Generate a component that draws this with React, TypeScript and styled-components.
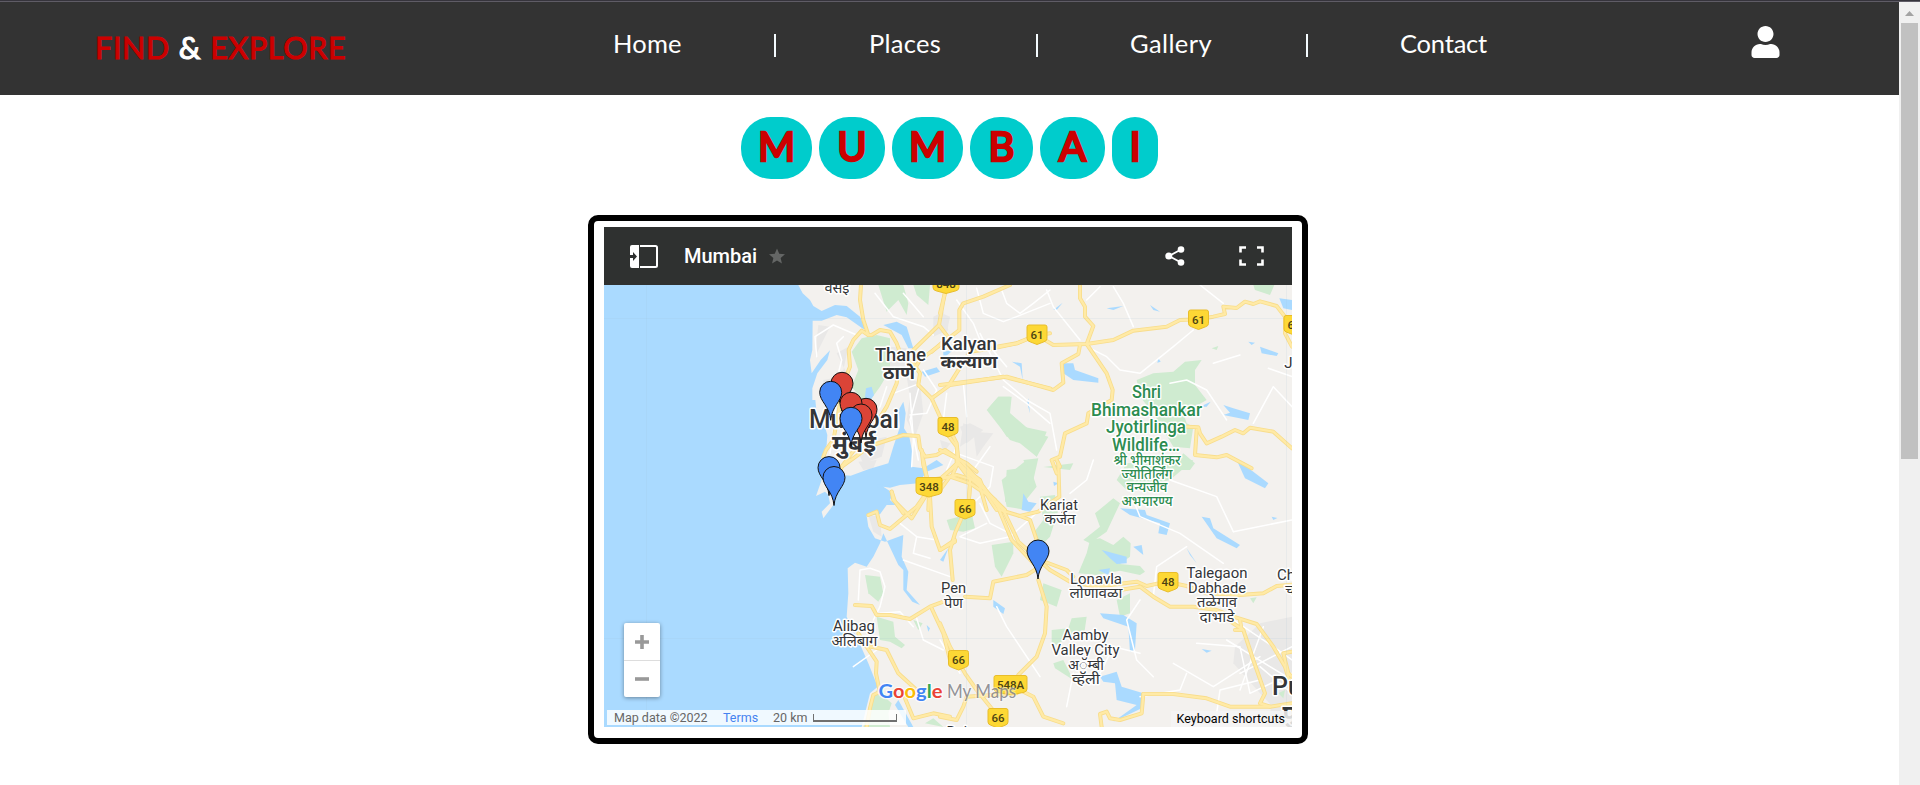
import React from 'react';
import styled, { createGlobalStyle } from 'styled-components';

const GlobalStyle = createGlobalStyle`
  * { box-sizing: border-box; }
  html, body { margin: 0; padding: 0; background: #fff; overflow: hidden; }
`;

const Window = styled.div`
  display: flex;
  flex-direction: column;
  width: 1920px;
  height: 785px;
  font-family: Lato, 'Open Sans', sans-serif;
`;

const WindowEdge = styled.div`
  flex: none;
  height: 2px;
  background: linear-gradient(#36343c 50%, #5f5c66 50%);
`;

const Viewport = styled.div`
  display: flex;
  flex: 1;
  min-height: 0;
`;

const Page = styled.div`
  flex: 1;
  min-width: 0;
  overflow: hidden;
`;

const ScrollTrack = styled.div`
  display: flex;
  flex-direction: column;
  align-items: center;
  width: 21px;
  background: #f0f0f0;
`;

const ScrollArrow = styled.svg`
  flex: none;
  width: 21px;
  height: 21px;
`;

const ScrollThumb = styled.div`
  width: 17px;
  height: 436px;
  background: #c1c1c1;
`;

const Header = styled.header`
  display: flex;
  height: 93px;
  padding-left: 95px;
  background: #333;
  color: #fff;
`;

const Brand = styled.div`
  width: 518px;
  padding-top: 26px;
  font-size: 30.5px;
  line-height: 38px;
  font-weight: 400;
  word-spacing: 0.5px;
  letter-spacing: 0.65px;
  color: #fff;
  white-space: nowrap;
  -webkit-text-stroke: 1.1px currentColor;
`;

const BrandWord = styled.span`
  color: #c00;
`;

const Nav = styled.nav`
  display: flex;
  width: 1138px;
  padding-top: 24px;
  font-size: 25.5px;
  line-height: 34px;
`;

const NavItem = styled.a<{ $width: number; $spacing?: number }>`
  width: ${(p) => p.$width}px;
  letter-spacing: ${(p) => p.$spacing ?? 0}px;
  white-space: nowrap;
`;

const NavDivider = styled.span<{ $width: number }>`
  width: ${(p) => p.$width}px;
  padding-top: 8px;
  &::before {
    content: '';
    display: block;
    width: 2px;
    height: 23px;
    background: #f4fbff;
  }
`;

const UserIcon = styled.svg`
  width: 29px;
  height: 32px;
  margin-top: 24px;
`;

const Title = styled.h1`
  display: flex;
  gap: 7px;
  height: 62px;
  margin: 22px 0 0 741px;
  color: #c00;
  font-size: 40px;
  font-weight: 400;
  line-height: 59px;
`;

const Letter = styled.span<{ $width: number }>`
  width: ${(p) => p.$width}px;
  border-radius: 30px;
  background: #0cc;
  text-align: center;
  -webkit-text-stroke: 2.6px #c00;
`;

const MapFrame = styled.section`
  width: 720px;
  height: 529px;
  margin: 36px 0 0 588px;
  padding: 6px 10px 11px;
  border: 6px solid #000;
  border-radius: 10px;
  font-family: Roboto, sans-serif;
`;

const MapBar = styled.div`
  display: flex;
  align-items: center;
  height: 58px;
  padding: 0 28px 0 26px;
  background: #2f3130;
  color: #fff;
`;

const MapTitle = styled.h2`
  flex: 1;
  display: flex;
  align-items: center;
  gap: 12px;
  margin: 0 0 0 26px;
  font-size: 20px;
  font-weight: 500;
`;

const BarIcon = styled.svg<{ $width: number; $height: number; $gap?: number }>`
  width: ${(p) => p.$width}px;
  height: ${(p) => p.$height}px;
  margin-left: ${(p) => p.$gap ?? 0}px;
`;

const MapCanvas = styled.div`
  position: relative;
  height: 442px;
  overflow: hidden;
`;

const MapDrawing = styled.svg`
  display: block;
  width: 688px;
  height: 442px;
`;

const ZoomControl = styled.div`
  position: absolute;
  left: 20px;
  top: 338px;
  width: 36px;
  border-radius: 2px;
  background: #fff;
  box-shadow: 0 1px 4px rgba(0, 0, 0, 0.4);
`;

const ZoomButton = styled.div`
  display: flex;
  align-items: center;
  justify-content: center;
  height: 37px;
  & + & { border-top: 1px solid #ddd; }
`;

const Attribution = styled.div`
  position: absolute;
  left: 3px;
  bottom: 2px;
  display: flex;
  align-items: center;
  width: 299px;
  height: 15px;
  padding-left: 7px;
  background: rgba(255, 255, 255, 0.82);
  color: #666;
  font-size: 12.5px;
  white-space: nowrap;
`;

const Credit = styled.span<{ $width: number; $link?: boolean }>`
  width: ${(p) => p.$width}px;
  color: ${(p) => (p.$link ? '#4583f0' : 'inherit')};
`;

const ScaleBar = styled.span`
  width: 84px;
  height: 8px;
  margin-top: 1px;
  border: solid #707070;
  border-width: 0 1px 2px;
`;

const Shortcuts = styled.div`
  position: absolute;
  right: 0;
  bottom: 0;
  height: 16px;
  padding: 0 7px 0 6px;
  background: rgba(245, 245, 245, 0.85);
  color: #000;
  font-size: 12.5px;
  line-height: 16px;
`;

const LETTERS: [string, number][] = [['M', 71], ['U', 66], ['M', 71], ['B', 63], ['A', 65], ['I', 46]];

/* Every tile is drawn at three units to the pixel, from its own corner. */
interface Tile {
  x: number;
  y: number;
  parks?: string[];
  lakes?: string[];
  urban?: string[];
  lanes?: string[];
  roads?: string[];
}

const SEA =
  '0,0 583,0 596,25 618,45 628,63 653,78 693,60 728,63 768,95 784,130 778,132 728,97 698,90 653,107 626,107 625,195 618,225 623,265 ' +
  '650,225 678,196 670,225 640,265 625,310 625,345 634,345 638,385 663,425 670,450 668,480 653,515 650,555 653,585 636,633 663,620 673,630 678,655 ' +
  '653,680 658,700 688,660 696,605 713,570 740,572 773,560 793,553 853,535 868,485 888,425 884,375 898,350 905,385 900,430 916,455 925,505 923,545 ' +
  '958,550 998,525 1018,540 968,560 943,595 888,600 858,608 838,605 868,625 858,645 875,660 848,660 828,688 788,692 793,725 813,760 843,770 898,750 893,815 ' +
  '913,860 908,915 948,960 925,950 898,915 898,855 883,840 838,745 828,775 808,815 788,845 753,833 731,850 733,925 728,995 758,1055 793,1135 821,1205 798,1225 778,1305 773,1326 0,1326';

const TILES: Tile[] = [
  {
    x: 790, y: 280,
    urban: [
      '85,135 120,140 75,230', '140,220 175,200 160,270 130,330 140,360 180,300', '100,300 150,290 140,380 105,400',
      '350,290 390,310 400,400 375,470 350,420 360,350', '430,110 460,95 475,150 430,170', '240,480 290,470 275,530 220,550 205,520',
      '300,200 350,205 340,290 300,280', '520,430 545,440 540,480 510,500', '550,455 610,460 580,500 560,530',
    ],
    parks: [
      '215,175 260,165 300,175 300,270 270,320 230,375 185,320 205,270 185,215', '265,15 340,15 355,70 350,105 325,60 290,95',
      '370,15 420,15 415,75 380,45', '595,385 625,350 660,350 655,395 725,455 775,470 740,530 700,480 650,470',
      '650,570 720,560 740,620 700,670 645,665', '700,540 745,535 730,600',
    ],
    lakes: ['228,325 245,320 252,345 235,370 225,350', '280,135 320,125 350,140 370,205 355,205 335,165 290,140', '395,275 440,262 450,275 405,290', '460,215 490,210 460,235'],
    lanes: [
      '80,230 75,170 130,135 200,165', '160,170 140,190 155,240 140,300 135,420 120,520', '255,40 310,110 400,140 430,165',
      '340,40 400,110', '500,60 550,130 570,180', '310,340 390,310 360,420 385,540', '400,270 440,330 410,400 360,405',
      '560,25 580,100 640,125 680,110 780,70', '470,340 460,420 480,450', '640,320 710,370 780,430', '500,520 610,560 600,620 530,690',
      '190,500 220,440 270,380 290,320', '360,340 370,480 365,560',
    ],
    roads: [
      '213,15 210,60 220,120 235,165 215,152 190,180 176,210 180,260 160,310 145,400 130,480 108,510 100,530',
      '235,165 245,165 270,150 300,155 320,190 335,230 370,250 390,280 385,315 425,355',
      '465,35 455,90 447,135 370,210', '447,135 475,172 425,215', '660,15 580,50 520,70 508,90 508,150 450,195 390,240 375,265',
      '780,160 742,165 680,190 620,203 540,215 480,310', '425,355 480,315 640,290 700,305 780,325',
      '425,355 450,410 475,440 500,490 505,545 485,590', '155,560 190,535 240,498 340,465 385,468 390,505 405,530 440,525 465,510 510,540 565,600 600,660 620,690',
      '395,510 400,555 418,620 415,690', '325,270 320,310 290,380 240,460 200,500 155,560 140,620', '305,635 315,665 340,700',
      '418,620 460,595 500,585 550,600 580,625 645,690', '540,600 535,690', '500,545 530,585 570,620 590,690', '440,605 500,555',
    ],
  },
  {
    x: 580, y: 460,
    urban: ['835,5 890,0 880,25 850,30', '865,165 900,170 905,230 880,215'],
    parks: ['855,345 900,350 910,400 895,425 865,400', '890,470 940,485 945,530 975,555 965,565 930,545 900,540', '1000,480 1028,490 1015,510', '870,730 890,690 935,730 925,760 930,801 850,801', '1035,790 1060,775 1090,801'],
    lakes: ['1040,495 1050,505 1045,515', '955,720 1000,801 985,801 945,735', '888,75 908,72 900,88'],
    lanes: ['835,420 840,330 870,325 900,335 915,380 900,440 880,480', '960,190 1010,230 1000,280 1050,295', '900,460 960,455 1000,500', '1070,240 1010,230', '970,300 1110,350', '820,620 890,570 880,540', '1010,475 1030,540 1090,570'],
    roads: [
      '825,435 875,438 890,465 930,465 990,477 1050,440 1090,425', '835,520 860,560 890,605 888,640 900,700', '850,555 920,570 945,620 955,640 1010,690',
      '1055,445 1090,520 1110,600', '975,715 1000,775 1060,760 1110,770', '860,801 870,745 880,705 900,695', '935,95 940,120 995,175 1045,95',
      '865,165 890,155 900,195 930,207 1010,140 1035,105', '1050,110 1055,200 1080,270 1125,245', '1030,0 1040,50', '785,20 810,0', '1050,60 1110,50',
    ],
  },
  {
    x: 940, y: 200,
    urban: ['60,680 90,670 130,690 80,730', '5,340 30,350 20,400 0,380', '0,720 30,730 60,690 10,760'],
    parks: [
      '590,540 640,520 700,515 735,485 785,480 765,510 765,555 800,600 730,640 740,670 760,680 750,745 700,740 640,640 600,590',
      '940,255 1003,255 990,285 945,270', '140,630 175,590 215,590 210,640 250,680 320,695 290,770 240,730 210,720', '815,445 835,438 830,450',
      '310,801 400,790 390,810', '730,760 765,790 750,810 690,810',
    ],
    lakes: [
      '370,490 400,490 405,510 475,535 475,548 400,540 370,520', '1018,295 1056,300 1056,330 1030,325', '960,440 1015,460 1010,468 965,460',
      '850,615 880,625 930,640 925,660 850,645 870,638', '500,325 550,318 520,330', '630,315 660,335 640,330', '340,330 368,308 350,330', '925,425 945,428 935,435', '780,620 812,605 800,620',
      '216,485 245,490 248,540 240,500', '265,595 270,640 262,610', '655,475 662,485 652,488',
    ],
    lanes: [
      '185,270 200,310 240,340 280,310 330,270', '320,270 340,320 420,420', '520,260 550,310 580,380', '440,440 500,470 540,510 600,520 700,440 760,390',
      '780,255 850,310', '120,400 190,540 260,600 330,640 350,750', '50,740 20,810', '690,550 740,540 800,570 840,630 860,660',
      '100,810 150,740', '150,440 200,500', '985,505 1056,530', '70,550 80,650', '940,670 1000,560 1056,620', '820,490 900,465', '480,260 440,300',
    ],
    roads: [
      '170,440 230,430 290,405 340,435 440,432 520,420 580,392 680,380 720,360 775,358 820,350 855,342 850,320 890,324 915,305 940,312 960,304 1010,318 1035,350 1035,400 1056,440',
      '420,255 420,295 435,320 435,350 460,378 440,432 500,520 518,570 515,600 445,640 440,670 375,700 360,770 335,780 350,820',
      '0,555 200,530 270,550 340,570 370,548 365,490 415,462 420,435', '0,340 15,280', '740,680 775,682 780,700 800,730 845,710 885,690 910,700 930,683 1000,695 1056,745',
      '770,690 765,765 830,772 860,765 935,805', '20,700 50,740 55,790', '0,750 80,790 110,815',
    ],
  },
  {
    x: 940, y: 460,
    urban: ['885,560 960,490 1056,470 1056,801 960,700 880,610', '1000,690 1056,650 1056,801 985,801'],
    parks: [
      '20,180 95,160 105,205 70,215 30,210', '155,255 220,245 220,280 185,350 165,320', '185,60 260,0 270,80 245,120 260,150 200,140',
      '300,110 345,105 355,150 330,230 300,260 280,220 310,180', '430,240 480,200 465,160 520,115 540,130 500,215 450,250', '415,340 440,280 450,240 480,235 520,255 550,230 572,250 570,290 540,312 600,318 615,335 600,345 540,332 470,345',
      '530,60 560,10 760,0 690,60 560,90', '310,370 365,390 350,440 300,420', '335,510 385,505 395,475 440,470 430,540 385,530 350,555 335,545', '530,420 570,400 570,460 540,470', '340,610 370,600 400,660 345,625',
      '1015,700 1035,690 1030,715', '930,415 950,412 940,430',
    ],
    lakes: [
      '250,100 265,125 290,130 270,155 245,150', '540,145 615,150 620,165 690,190 680,225 655,220 660,190 570,165', '485,270 560,290 560,310 530,312 510,295', '580,260 605,255 610,285',
      '785,170 810,175 820,205 900,255 890,265 830,235', '890,0 940,35 985,70 975,85 915,55', '480,460 550,465 590,490 585,570 570,575 565,500 490,475',
      '480,650 530,635 545,680 610,700 605,745 520,785 590,735 530,720 525,670 490,665', '160,420 195,445 190,462 160,440', '785,567 815,572 800,578',
      '740,265 770,310 750,285', '995,170 1012,174 1000,180', '475,330 510,325 505,345', '340,65 355,70 342,78', '0,300 25,265 10,305',
    ],
    lanes: [
      '140,190 60,230 120,250 210,230 300,150', '390,100 440,60 460,0', '580,120 600,170 720,220 850,310', '690,60 830,110 880,215', '1056,180 880,215',
      '170,440 200,500 300,650', '600,420 560,480 590,600 640,650', '640,410 650,320 740,260', '880,480 1000,560 1056,600', '770,550 900,560 930,700 1056,640',
      '700,610 820,680 960,590', '0,540 60,640', '480,640 520,560 600,580', '900,640 1056,560', '970,500 900,690', '400,640 380,740', '830,760 840,690 960,660', '860,540 1056,660', '600,710 720,690 740,640', '120,130 150,190 210,220', '960,620 1056,700',
    ],
    roads: [
      '0,60 50,10 120,60 130,85 190,150 235,245 330,330 390,365 470,380 590,365 620,378 680,365 740,378 800,400 900,405 970,400 1010,378 1056,374',
      '0,90 30,50 90,70 165,120 215,240 290,320', '50,0 85,40 130,80 180,150 240,168 270,180 290,240', '355,10 358,110 295,155 240,168',
      '300,300 380,330 400,350', '470,400 540,390 600,380 640,410 690,440 760,440 830,450 880,470 950,492 1000,560 1035,620 1056,690',
      '865,480 910,510 940,600 975,700 960,730 990,740', '885,510 905,510 900,480', '1056,575 1030,580 1045,640 1056,650', '300,320 260,345 160,365 150,415 75,410',
      '295,360 320,440 315,520 290,590 235,645', '75,150 45,220 30,270 38,360', '0,270 45,240', '90,80 85,140', '0,490 30,560 75,640 110,690 175,770',
      '250,695 280,710 310,770 370,790', '610,702 700,702 800,715 870,740 990,740 1056,730', '610,702 605,760 540,780 510,775 500,755 480,762 485,801',
      '0,770 50,780 70,740 80,710 230,700', '350,0 360,20',
    ],
  },
];

interface LabelSpec {
  text: string;
  x: number;
  y: number;
  size: number;
  width?: number;
  weight?: number;
  color?: string;
}

const GREEN = '#2c8c50';

const LABELS: LabelSpec[] = [
  { text: 'वसई', x: 837, y: 292.5, size: 15, width: 25 },
  { text: 'Thane', x: 900.5, y: 360.5, size: 18.5, width: 51, weight: 500 },
  { text: 'ठाणे', x: 899, y: 378.5, size: 18, width: 32, weight: 700 },
  { text: 'Kalyan', x: 969, y: 349.5, size: 18.5, width: 56, weight: 500 },
  { text: 'कल्याण', x: 969, y: 368, size: 18, width: 57, weight: 700 },
  { text: 'Mumbai', x: 854, y: 427.5, size: 25, width: 90, weight: 500 },
  { text: 'मुंबई', x: 854, y: 451.5, size: 24, width: 44, weight: 700 },
  { text: 'Shri', x: 1146.5, y: 398, size: 17.5, width: 29, weight: 500, color: GREEN },
  { text: 'Bhimashankar', x: 1146.5, y: 415.5, size: 17.5, width: 111, weight: 500, color: GREEN },
  { text: 'Jyotirlinga', x: 1146, y: 433, size: 17.5, width: 80, weight: 500, color: GREEN },
  { text: 'Wildlife…', x: 1146, y: 450.5, size: 17.5, width: 68, weight: 500, color: GREEN },
  { text: 'श्री भीमाशंकर', x: 1147, y: 464.5, size: 14, width: 67, weight: 500, color: GREEN },
  { text: 'ज्योतिर्लिंग', x: 1147, y: 478.5, size: 14, width: 51, weight: 500, color: GREEN },
  { text: 'वन्यजीव', x: 1147, y: 492, size: 14, width: 41, weight: 500, color: GREEN },
  { text: 'अभयारण्य', x: 1147, y: 505.5, size: 14, width: 51, weight: 500, color: GREEN },
  { text: 'Karjat', x: 1059, y: 509.5, size: 15, width: 38 },
  { text: 'कर्जत', x: 1060, y: 523.5, size: 15, width: 31 },
  { text: 'Lonavla', x: 1096, y: 584, size: 15, width: 52 },
  { text: 'लोणावळा', x: 1096, y: 598, size: 15, width: 53 },
  { text: 'Talegaon', x: 1217, y: 577.5, size: 15, width: 61 },
  { text: 'Dabhade', x: 1217, y: 592.5, size: 15, width: 58 },
  { text: 'तळेगाव', x: 1217, y: 607, size: 15, width: 40 },
  { text: 'दाभाडे', x: 1217, y: 621.5, size: 15, width: 35 },
  { text: 'Aamby', x: 1085.5, y: 639.5, size: 15, width: 46 },
  { text: 'Valley City', x: 1085.5, y: 654.5, size: 15, width: 68 },
  { text: 'अ◌ॅम्बी', x: 1086, y: 669.5, size: 15, width: 36 },
  { text: 'व्हॅली', x: 1086, y: 684, size: 15, width: 28 },
  { text: 'Pen', x: 953.5, y: 593, size: 15, width: 25 },
  { text: 'पेण', x: 953.5, y: 607.5, size: 15, width: 19 },
  { text: 'Alibag', x: 854, y: 631, size: 15, width: 42 },
  { text: 'अलिबाग', x: 854.5, y: 645.5, size: 15, width: 46 },
  { text: 'Ch', x: 1286, y: 580, size: 15 },
  { text: 'च', x: 1290, y: 595, size: 15 },
  { text: 'J', x: 1288.5, y: 368, size: 15 },
  { text: 'Pu', x: 1287, y: 695, size: 25, weight: 500 },
  { text: 'पु', x: 1290, y: 722, size: 24, weight: 700 },
  { text: 'Roha', x: 963, y: 736.5, size: 15, width: 33 },
];

const SHIELDS: [string, number, number, number][] = [
  ['848', 946, 283.5, 26], ['61', 1037, 334.5, 20], ['61', 1198.5, 319.5, 20], ['61', 1294, 325, 20], ['48', 948, 427, 20],
  ['348', 929, 487, 26], ['66', 965, 509, 20], ['48', 1168, 582, 20], ['66', 958.5, 660, 20], ['66', 998, 718, 20], ['548A', 1010.5, 685, 33],
];

const PINS: [number, number, boolean][] = [
  [842, 383.3, true], [830.7, 392.3, false], [866, 409.3, true], [851, 403.3, true], [861, 415, true], [851, 418.3, false],
  [829, 467.6, false], [834, 477.5, false], [1038, 551, false],
];

const Polys = ({ items, fill }: { items?: string[]; fill: string }) => (
  <>{(items ?? []).map((p) => <polygon key={p} points={p} fill={fill} />)}</>
);

const Lines = ({ items, stroke, width }: { items?: string[]; stroke: string; width: number }) => (
  <g fill="none" stroke={stroke} strokeWidth={width} strokeLinejoin="round" strokeLinecap="round">
    {(items ?? []).map((p) => <polyline key={p} points={p} />)}
  </g>
);

const layer = (draw: (t: Tile) => React.ReactNode) =>
  TILES.map((t) => (
    <g key={`${t.x}-${t.y}`} transform={`translate(${t.x} ${t.y}) scale(0.33333)`}>{draw(t)}</g>
  ));

const Label = ({ text, x, y, size, width, weight = 400, color = '#333538' }: LabelSpec) => (
  <text
    x={x}
    y={y}
    fontSize={size}
    fontWeight={weight}
    fill={color}
    textLength={width}
    lengthAdjust="spacingAndGlyphs"
    textAnchor="middle"
    stroke="#fff"
    strokeWidth={3}
    strokeLinejoin="round"
    paintOrder="stroke"
  >
    {text}
  </text>
);

const Shield = ({ text, x, y, w }: { text: string; x: number; y: number; w: number }) => (
  <g transform={`translate(${x} ${y})`}>
    <path
      d={`M${-w / 2 + 2},-9.5 H${w / 2 - 2} Q${w / 2},-9.5 ${w / 2},-7.5 V4 Q${w / 2},6.5 ${w / 2 - 3},7.3 L0,10 L${-w / 2 + 3},7.3 Q${-w / 2},6.5 ${-w / 2},4 V-7.5 Q${-w / 2},-9.5 ${-w / 2 + 2},-9.5 Z`}
      fill="#fdd835"
      stroke="#e8bd2c"
      strokeWidth="1"
    />
    <text y="4.2" fontSize="11.5" fontWeight="500" fill="#4b4212" textAnchor="middle">{text}</text>
  </g>
);

const MapPicture = () => (
  <MapDrawing viewBox="604 285 688 442" fontFamily="Roboto, 'Noto Sans', 'Noto Sans Devanagari', sans-serif">
    <rect x="604" y="285" width="688" height="442" fill="#f3f1ee" />
    {layer((t) => <Polys items={t.urban} fill="#e9e8e7" />)}
    {layer((t) => <Polys items={t.parks} fill="#cfebd0" />)}
    <g transform="translate(604 285) scale(0.33333)"><polygon points={SEA} fill="#aadaff" /></g>
    {layer((t) => <Polys items={t.lakes} fill="#aadaff" />)}
    {layer((t) => <Lines items={t.lanes} stroke="#fff" width={4.5} />)}
    {layer((t) => <Lines items={t.roads} stroke="#f8dd8c" width={12} />)}
    {layer((t) => <Lines items={t.roads} stroke="#ffeaa6" width={7} />)}
    <path d="M646.5,285V727 M604,318.5H1292 M604,638.5H1292 M966.5,285V727 M1286.5,285V727" stroke="#9dbcd0" strokeOpacity="0.12" />
    {SHIELDS.map(([text, x, y, w]) => <Shield key={`${x}-${y}`} text={text} x={x} y={y} w={w} />)}
    {LABELS.map((l) => <Label key={`${l.text}-${l.x}`} {...l} />)}
    {PINS.map(([x, y, red]) => (
      <path
        key={`${x}-${y}`}
        transform={`translate(${x} ${y})`}
        d="M0,28 C-1,14 -11,9 -11,0 A11,11 0 1 1 11,0 C11,9 1,14 0,28 Z"
        fill={red ? '#db4437' : '#4285f4'}
        stroke="#111"
        strokeWidth="1"
      />
    ))}
    <g fontFamily="Lato, sans-serif" fontSize="19" stroke="#fff" strokeWidth="2.5" strokeOpacity="0.8" paintOrder="stroke" strokeLinejoin="round">
      <text x="878.5" y="698" fontWeight="700" textLength="64" lengthAdjust="spacingAndGlyphs">
        <tspan fill="#4285f4">G</tspan><tspan fill="#ea4335">o</tspan><tspan fill="#fbbc05">o</tspan>
        <tspan fill="#4285f4">g</tspan><tspan fill="#34a853">l</tspan><tspan fill="#ea4335">e</tspan>
      </text>
      <text x="947" y="698" fill="#85858b" fillOpacity="0.9" strokeOpacity="0.4" textLength="69" lengthAdjust="spacingAndGlyphs">My Maps</text>
    </g>
  </MapDrawing>
);

export default function App() {
  return (
    <Window>
      <GlobalStyle />
      <WindowEdge />
      <Viewport>
        <Page>
          <Header>
            <Brand><BrandWord>FIND</BrandWord> &amp; <BrandWord>EXPLORE</BrandWord></Brand>
            <Nav>
              <NavItem $width={161} $spacing={0.2}>Home</NavItem>
              <NavDivider $width={95} />
              <NavItem $width={167} $spacing={0.3}>Places</NavItem>
              <NavDivider $width={94} />
              <NavItem $width={176} $spacing={0.4}>Gallery</NavItem>
              <NavDivider $width={94} />
              <NavItem $width={120} $spacing={-0.2}>Contact</NavItem>
            </Nav>
            <UserIcon viewBox="0 0 448 512" fill="#fff">
              <path d="M224 256c70.7 0 128-57.3 128-128S294.7 0 224 0 96 57.3 96 128s57.3 128 128 128zm89.6 32h-16.7c-22.2 10.2-46.9 16-72.9 16s-50.6-5.8-72.9-16h-16.7C60.2 288 0 348.2 0 422.4V464c0 26.5 21.5 48 48 48h352c26.5 0 48-21.5 48-48v-41.6c0-74.2-60.2-134.4-134.4-134.4z" />
            </UserIcon>
          </Header>
          <Title>
            {LETTERS.map(([ch, w], i) => <Letter key={i} $width={w}>{ch}</Letter>)}
          </Title>
          <MapFrame>
            <MapBar>
              <BarIcon $width={28} $height={23} viewBox="0 0 28 23">
                <path d="M2,0H9V23H2Q0,23 0,21V13H3V16L7,11.5L3,7V10H0V2Q0,0 2,0Z" fill="#fff" />
                <path d="M10,1H25.5Q27,1 27,2.500V20.500Q27,22 25.500,22H10" fill="none" stroke="#fff" strokeWidth="2" />
              </BarIcon>
              <MapTitle>
                Mumbai
                <BarIcon $width={16} $height={16} viewBox="2 2 20 19">
                  <path d="M12 17.270L18.180 21l-1.640-7.030L22 9.240l-7.190-.61L12 2 9.190 8.630 2 9.240l5.460 4.730L5.820 21z" fill="#646665" />
                </BarIcon>
              </MapTitle>
              <BarIcon $width={20} $height={20} viewBox="0 0 20 20">
                <path d="M16,3.500L4,10L16,16.500" fill="none" stroke="#fff" strokeWidth="1.800" />
                <circle cx="16" cy="3.500" r="3.300" fill="#fff" />
                <circle cx="3.800" cy="10" r="3.500" fill="#fff" />
                <circle cx="16" cy="16.500" r="3.300" fill="#fff" />
              </BarIcon>
              <BarIcon $width={25} $height={20} $gap={54} viewBox="0 0 25 20">
                <path d="M1.500,6.500V1.500H7 M18,1.500H23.500V6.500 M23.500,13.500V18.500H18 M7,18.500H1.500V13.500" fill="none" stroke="#fff" strokeWidth="2.600" />
              </BarIcon>
            </MapBar>
            <MapCanvas>
              <MapPicture />
              <ZoomControl>
                <ZoomButton>
                  <svg width="14" height="14" viewBox="0 0 14 14"><path d="M7,0V14M0,7H14" stroke="#999" strokeWidth="3.600" /></svg>
                </ZoomButton>
                <ZoomButton>
                  <svg width="14" height="14" viewBox="0 0 14 14"><path d="M0,7H14" stroke="#999" strokeWidth="3.600" /></svg>
                </ZoomButton>
              </ZoomControl>
              <Attribution>
                <Credit $width={109}>Map data ©2022</Credit>
                <Credit $width={50} $link>Terms</Credit>
                <Credit $width={40}>20 km</Credit>
                <ScaleBar />
              </Attribution>
              <Shortcuts>Keyboard shortcuts</Shortcuts>
            </MapCanvas>
          </MapFrame>
        </Page>
        <ScrollTrack>
          <ScrollArrow viewBox="0 0 21 21"><path d="M6,14L10.500,9L15,14Z" fill="#a3a3a3" /></ScrollArrow>
          <ScrollThumb />
        </ScrollTrack>
      </Viewport>
    </Window>
  );
}
